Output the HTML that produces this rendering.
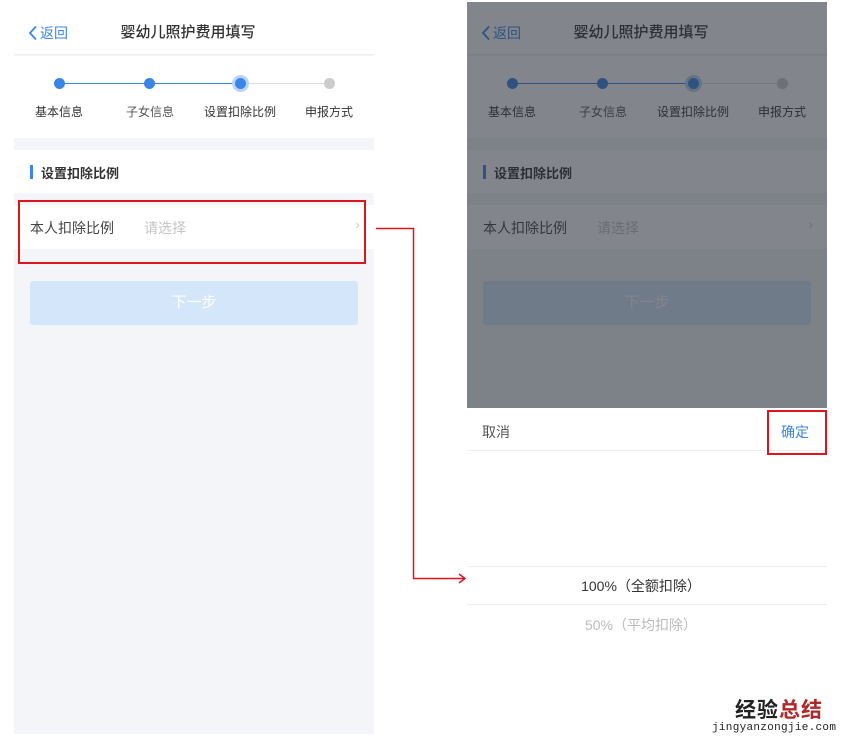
<!DOCTYPE html>
<html><head><meta charset="utf-8"><style>
*{margin:0;padding:0;box-sizing:border-box}
body{width:862px;height:744px;background:#fff;position:relative;overflow:hidden;font-family:"Liberation Sans","Noto Sans CJK SC",sans-serif}
.ph{position:absolute;width:360px;background:#f4f5f8;overflow:hidden}
.hdr{position:absolute;left:0;top:0;width:360px;height:55px;background:#fff;border-bottom:1px solid #eee}
.back{position:absolute;left:14px;top:23px;font-size:14px;color:#3a86e8;display:flex;align-items:center;gap:2px}
.title{position:absolute;left:-6px;width:360px;top:21px;text-align:center;font-size:15px;color:#333;font-weight:500}
.steps{position:absolute;left:0;top:56px;width:360px;height:82px;background:#fff}
.dot{position:absolute;top:22px;width:11px;height:11px;border-radius:50%;background:#3a86e8}
.ln{position:absolute;top:27px;height:1px}
.sl{position:absolute;top:47px;font-size:12px;color:#333;width:90px;text-align:center}
.sec{position:absolute;left:0;top:150px;width:360px;height:43px;background:#fff}
.bar{position:absolute;left:16px;top:15px;width:3px;height:14px;background:#3a86e8}
.sect{position:absolute;left:27px;top:13px;font-size:13px;font-weight:bold;color:#333}
.row{position:absolute;left:0;top:205px;width:360px;height:44px;background:#fff}
.btn{position:absolute;left:16px;top:281px;width:328px;height:44px;background:#d4e6fa;border-radius:3px;color:#fff;text-align:center;line-height:44px;font-size:15px}
.red{position:absolute;border:2px solid #e0141e}
</style></head><body>

<div class="ph" style="left:14px;top:0;height:734px">
 <div class="hdr"><div class="back"><svg width="10" height="16" viewBox="0 0 10 16"><path d="M8 1.5L2 8L8 14.5" fill="none" stroke="#3a86e8" stroke-width="1.8"/></svg>返回</div><div class="title">婴幼儿照护费用填写</div></div>
 <div class="steps">
  <div class="ln" style="left:45px;width:180px;background:#3a86e8"></div>
  <div class="ln" style="left:225px;width:90px;background:#ddd"></div>
  <div class="dot" style="left:40px"></div>
  <div class="dot" style="left:130px"></div>
  <div class="dot" style="left:218px;top:19px;width:17px;height:17px;border:3px solid #b9d5f6"></div>
  <div class="dot" style="left:310px;background:#ccc"></div>
  <div class="sl" style="left:0">基本信息</div>
  <div class="sl" style="left:91px;color:#555">子女信息</div>
  <div class="sl" style="left:181px">设置扣除比例</div>
  <div class="sl" style="left:270px">申报方式</div>
 </div>
 <div class="sec"><div class="bar"></div><div class="sect">设置扣除比例</div></div>
 <div class="row"><span style="position:absolute;left:16px;top:13px;font-size:14px;color:#444">本人扣除比例</span><span style="position:absolute;left:130px;top:13px;font-size:14px;color:#c4c4c4">请选择</span><span style="position:absolute;right:14px;top:11px;font-size:14px;color:#ccc">›</span></div>
 <div class="btn">下一步</div>
</div>

<div class="ph" style="left:467px;top:2px;height:406px">
 <div style="position:absolute;left:0;top:-2px;width:360px;height:406px">
 <div class="hdr"><div class="back"><svg width="10" height="16" viewBox="0 0 10 16"><path d="M8 1.5L2 8L8 14.5" fill="none" stroke="#3a86e8" stroke-width="1.8"/></svg>返回</div><div class="title">婴幼儿照护费用填写</div></div>
 <div class="steps">
  <div class="ln" style="left:45px;width:180px;background:#3a86e8"></div>
  <div class="ln" style="left:225px;width:90px;background:#ddd"></div>
  <div class="dot" style="left:40px"></div>
  <div class="dot" style="left:130px"></div>
  <div class="dot" style="left:218px;top:19px;width:17px;height:17px;border:3px solid #b9d5f6"></div>
  <div class="dot" style="left:310px;background:#ccc"></div>
  <div class="sl" style="left:0">基本信息</div>
  <div class="sl" style="left:91px;color:#555">子女信息</div>
  <div class="sl" style="left:181px">设置扣除比例</div>
  <div class="sl" style="left:270px">申报方式</div>
 </div>
 <div class="sec"><div class="bar"></div><div class="sect">设置扣除比例</div></div>
 <div class="row"><span style="position:absolute;left:16px;top:13px;font-size:14px;color:#444">本人扣除比例</span><span style="position:absolute;left:130px;top:13px;font-size:14px;color:#c4c4c4">请选择</span><span style="position:absolute;right:14px;top:11px;font-size:14px;color:#ccc">›</span></div>
 <div class="btn">下一步</div>
 </div>
 <div style="position:absolute;left:0;top:0;width:360px;height:406px;background:rgba(40,45,55,0.58)"></div>
</div>

<div style="position:absolute;left:467px;top:408px;width:360px;height:326px;background:#fff">
 <div style="position:absolute;left:15px;top:14px;font-size:14px;color:#555">取消</div>
 <div style="position:absolute;left:314px;top:14px;font-size:14px;color:#3a86e8">确定</div>
 <div style="position:absolute;left:0;top:42px;width:360px;height:1px;background:#eee"></div>
 <div style="position:absolute;left:0;top:158px;width:360px;height:1px;background:#eee"></div>
 <div style="position:absolute;left:0;top:196px;width:360px;height:1px;background:#eee"></div>
 <div style="position:absolute;left:-6px;top:168px;width:360px;text-align:center;font-size:14px;color:#333">100%（全额扣除）</div>
 <div style="position:absolute;left:-6px;top:207px;width:360px;text-align:center;font-size:14px;color:#bbb">50%（平均扣除）</div>
</div>

<div class="red" style="left:18px;top:200px;width:348px;height:64px"></div>
<div class="red" style="left:767px;top:410px;width:60px;height:45px"></div>
<svg style="position:absolute;left:0;top:0" width="862" height="744">
 <path d="M376 228.5H413.5V578.5H464" fill="none" stroke="#e0141e" stroke-width="1.5"/>
 <path d="M459 574L465 578.5L459 583" fill="none" stroke="#e0141e" stroke-width="1.5"/>
</svg>

<div style="position:absolute;left:735px;top:694px;font-size:21px;font-weight:bold;color:#222;letter-spacing:1px">经验<span style="color:#b0282a">总结</span></div>
<div style="position:absolute;left:712px;top:722px;font-size:11px;color:#222;font-family:'Liberation Mono',monospace;letter-spacing:0.3px">jingyanzongjie.com</div>
</body></html>
